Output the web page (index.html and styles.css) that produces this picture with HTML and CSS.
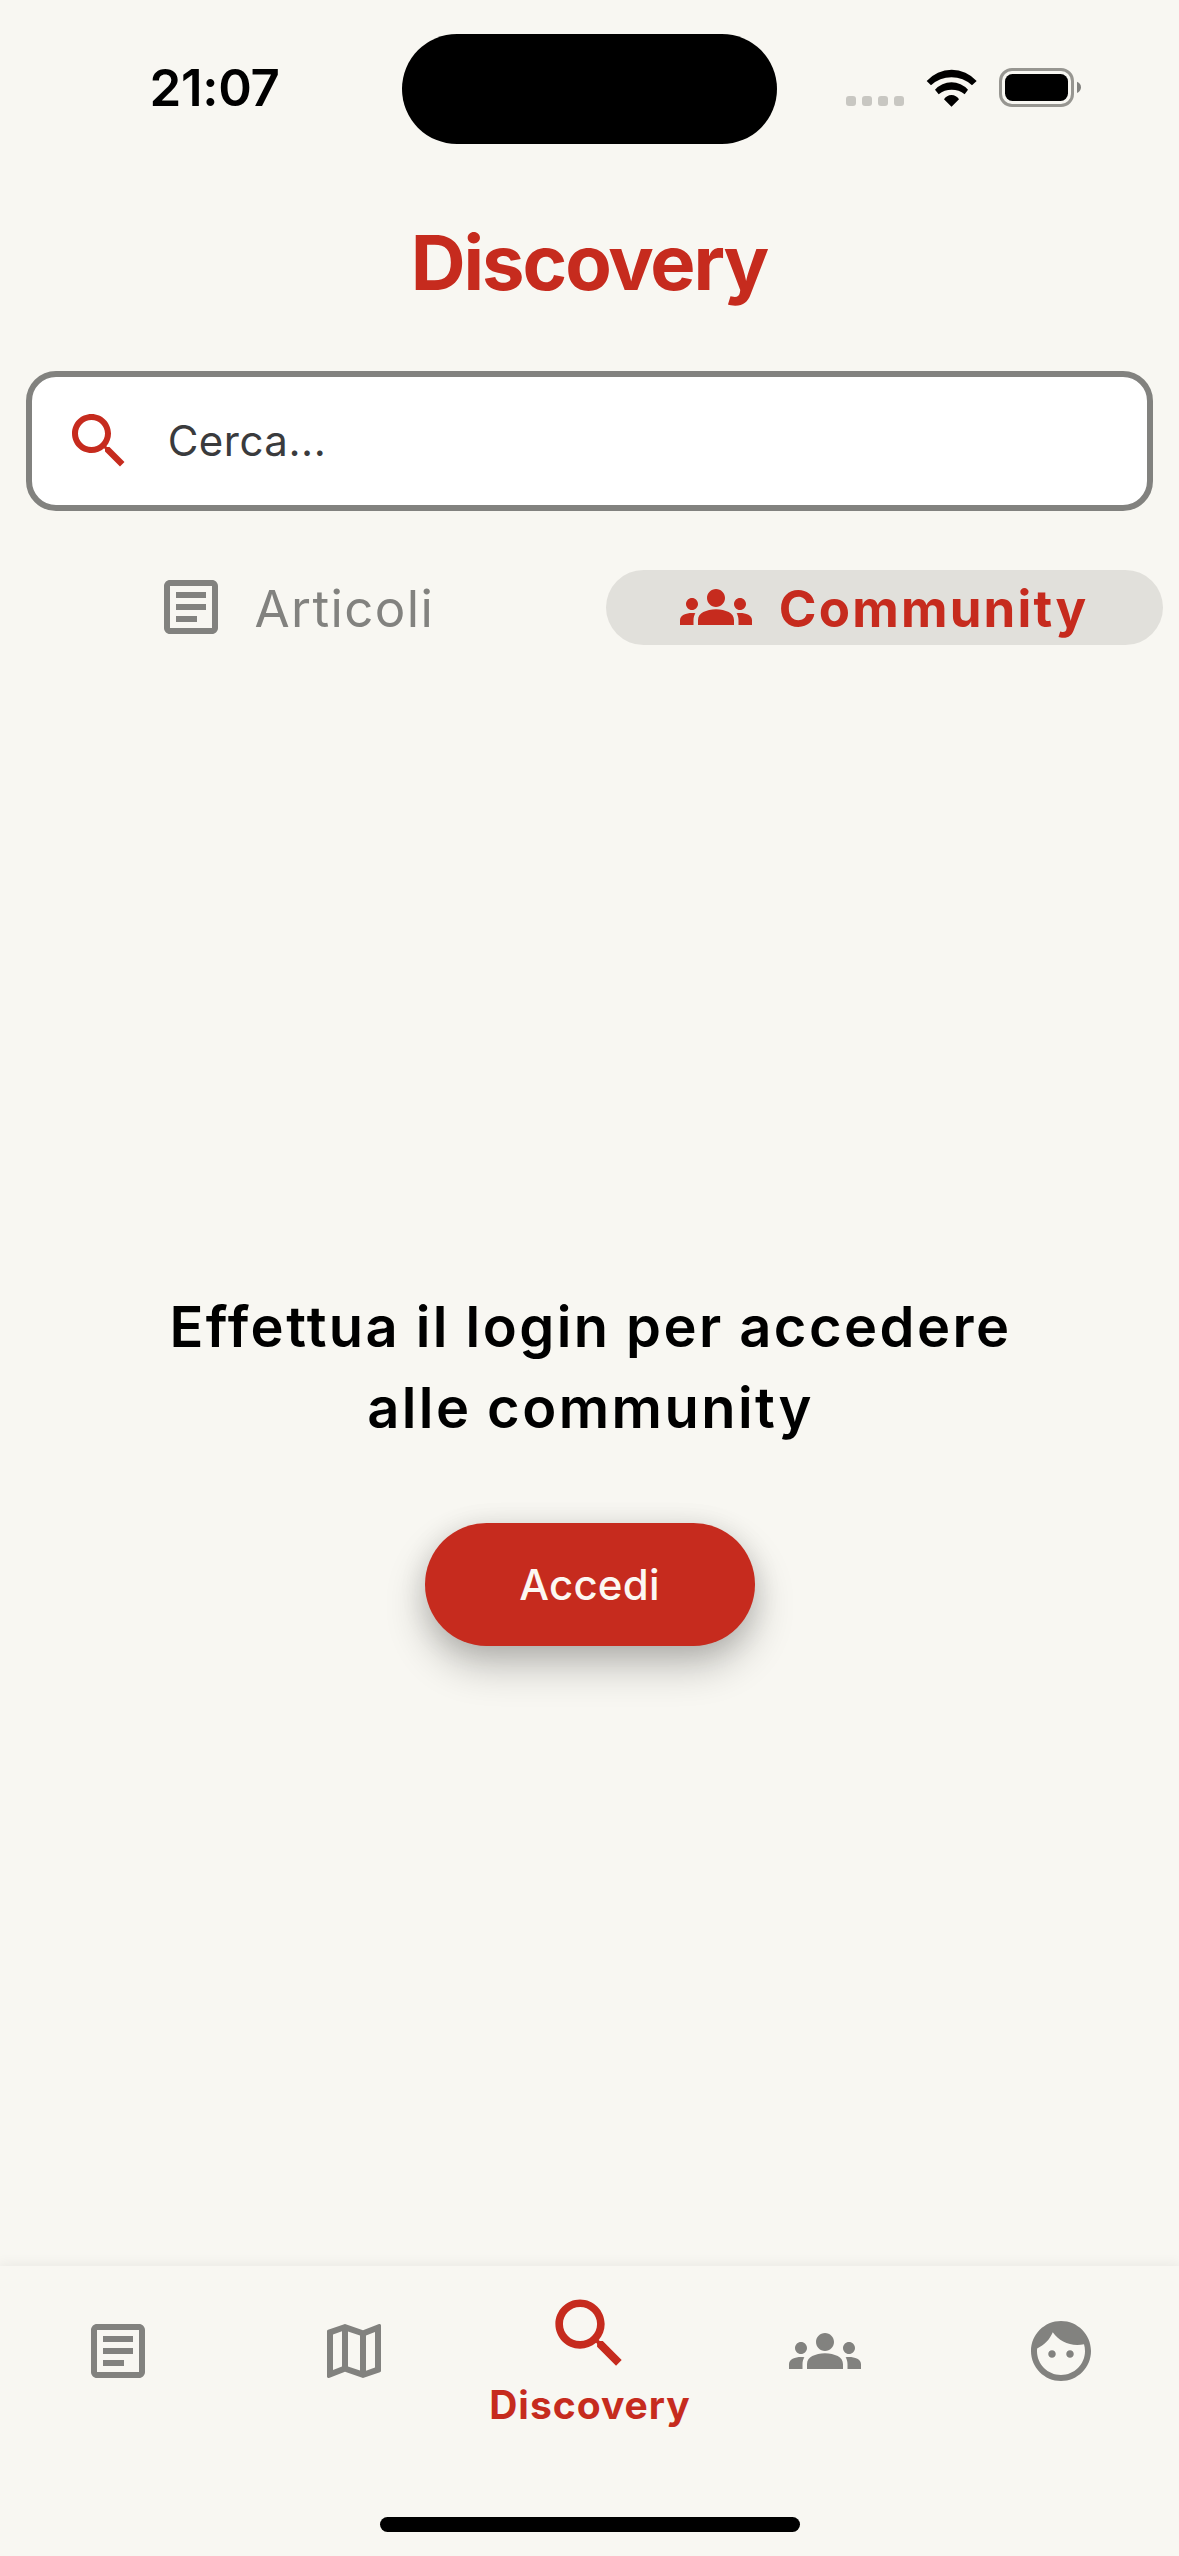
FILE: index.html
```html
<!DOCTYPE html>
<html lang="it">
<head>
<meta charset="utf-8">
<title>Discovery</title>
<link rel="stylesheet" href="styles.css">
</head>
<body>
<svg class="sprite" aria-hidden="true">
  <symbol id="search" viewBox="0 0 24 24"><path d="M15.5 14h-.79l-.28-.27C15.41 12.59 16 11.11 16 9.5 16 5.91 13.09 3 9.5 3S3 5.91 3 9.5 5.91 16 9.5 16c1.61 0 3.09-.59 4.23-1.57l.27.28v.79l5 4.99L20.49 19l-4.99-5zm-6 0C7.01 14 5 11.99 5 9.5S7.01 5 9.5 5 14 7.01 14 9.5 11.99 14 9.5 14z"/></symbol>
  <symbol id="article" viewBox="0 0 24 24"><path d="M19 5v14H5V5h14m0-2H5c-1.1 0-2 .9-2 2v14c0 1.1.9 2 2 2h14c1.1 0 2-.9 2-2V5c0-1.1-.9-2-2-2zM14 17H7v-2h7v2zm3-4H7v-2h10v2zm0-4H7V7h10v2z"/></symbol>
  <symbol id="groups" viewBox="0 0 24 24"><path d="M12 12.75c1.63 0 3.07.39 4.24.9 1.08.48 1.76 1.56 1.76 2.73V18H6v-1.61c0-1.18.68-2.26 1.76-2.73 1.17-.52 2.61-.91 4.24-.91zM4 13c1.1 0 2-.9 2-2s-.9-2-2-2-2 .9-2 2 .9 2 2 2zm1.13 1.1c-.37-.06-.74-.1-1.13-.1-.99 0-1.93.21-2.78.58C.48 14.9 0 15.62 0 16.43V18h4.5v-1.61c0-.83.23-1.61.63-2.29zM20 13c1.1 0 2-.9 2-2s-.9-2-2-2-2 .9-2 2 .9 2 2 2zm4 3.43c0-.81-.48-1.53-1.22-1.85-.85-.37-1.79-.58-2.78-.58-.39 0-.76.04-1.13.1.4.68.63 1.46.63 2.29V18H24v-1.57zM12 6c1.66 0 3 1.34 3 3s-1.34 3-3 3-3-1.34-3-3 1.34-3 3-3z"/></symbol>
  <symbol id="map" viewBox="0 0 24 24"><path d="M20.5 3l-.16.03L15 5.1 9 3 3.36 4.9c-.21.07-.36.25-.36.48V20.5c0 .28.22.5.5.5l.16-.03L9 18.9l6 2.1 5.64-1.9c.21-.07.36-.25.36-.48V3.5c0-.28-.22-.5-.5-.5zM10 5.47l4 1.4v11.66l-4-1.4V5.47zm-5 .99l3-1.01v11.7l-3 1.16V6.46zm14 11.08l-3 1.01V6.86l3-1.16v11.84z"/></symbol>
  <symbol id="face" viewBox="0 0 24 24"><path d="M9 11.75c-.69 0-1.25.56-1.25 1.25s.56 1.25 1.25 1.25 1.25-.56 1.25-1.25-.56-1.25-1.25-1.25zm6 0c-.69 0-1.25.56-1.25 1.25s.56 1.25 1.25 1.25 1.25-.56 1.25-1.25-.56-1.25-1.25-1.25zM12 2C6.48 2 2 6.48 2 12s4.48 10 10 10 10-4.48 10-10S17.52 2 12 2zm0 18c-4.41 0-8-3.59-8-8 0-.29.02-.58.05-.86 2.36-1.05 4.23-2.98 5.21-5.37C11.07 8.33 14.05 10 17.42 10c.78 0 1.53-.09 2.25-.26.21.71.33 1.47.33 2.26 0 4.41-3.59 8-8 8z"/></symbol>
</svg>
<div class="screen">
  <div class="status">
    <div class="time">21:07</div>
    <div class="island"></div>
    <div class="indicators">
      <div class="cellular"><i></i><i></i><i></i><i></i></div>
      <svg class="wifi" viewBox="438 145 153 114"><path d="M440 181A100 100 0 0 1 590 181L576 194A90 90 0 0 0 453 194ZM465 207A66 66 0 0 1 564 207L554 220.500A64 64 0 0 0 476 220.500ZM492 236A26 26 0 0 1 537 236L514.500 258Z"/></svg>
      <svg class="battery" viewBox="0 0 82 39"><rect class="battery-shell" x="1.500" y="1.500" width="72" height="36" rx="11.500"/><rect x="6" y="6" width="63" height="27" rx="7.500"/><path class="battery-tip" d="M78 13.700C80.700 14.800 82 16.900 82 19.300S80.700 23.900 78 25Z"/></svg>
    </div>
  </div>
  <h1 class="title">Discovery</h1>
  <div class="search-box">
    <svg class="icon red"><use href="#search"/></svg>
    <span class="placeholder">Cerca...</span>
  </div>
  <div class="tabs">
    <div class="tab"><svg class="icon"><use href="#article"/></svg><span>Articoli</span></div>
    <div class="tab tab-active"><svg class="icon"><use href="#groups"/></svg><span>Community</span></div>
  </div>
  <main class="content">
    <p class="message">Effettua il login per accedere<br>alle community</p>
    <button class="login">Accedi</button>
  </main>
  <nav class="nav">
    <div class="nav-items">
      <a class="nav-item"><svg class="icon"><use href="#article"/></svg></a>
      <a class="nav-item"><svg class="icon"><use href="#map"/></svg></a>
      <a class="nav-item nav-active"><svg class="icon"><use href="#search"/></svg><span class="nav-label">Discovery</span></a>
      <a class="nav-item"><svg class="icon"><use href="#groups"/></svg></a>
      <a class="nav-item"><svg class="icon"><use href="#face"/></svg></a>
    </div>
    <div class="home-indicator"></div>
  </nav>
</div>
</body>
</html>
```

FILE: styles.css
```css
:root {
  --bg: #f8f7f2;
  --red: #c62b1e;
  --grey: #82827f;
}

* { box-sizing: border-box; }

body {
  margin: 0;
  background: var(--bg);
  font-family: Inter, "Liberation Sans", sans-serif;
  color: #000;
}

.sprite { display: none; }

.screen {
  display: flex;
  flex-direction: column;
  width: 1179px;
  height: 2556px;
  overflow: hidden;
}

.icon {
  display: block;
  flex: none;
  width: 72px;
  height: 72px;
  fill: currentColor;
}

.red { color: var(--red); }

/* Status bar */
.status {
  display: grid;
  grid-template-columns: 402px 375px 402px;
  align-items: center;
  flex: none;
  height: 177px;
}

.time {
  padding: 0 0 1px 149.5px;
  font-size: 51px;
  font-weight: 600;
  line-height: 60px;
  letter-spacing: -0.3px;
}

.island {
  height: 110.5px;
  margin-top: 1px;
  border-radius: 56px;
  background: #000;
}

.indicators {
  display: flex;
  align-items: center;
  padding: 0 0 2px 69px;
}

.cellular {
  display: flex;
  gap: 6px;
  padding-top: 26px;
}

.cellular i {
  width: 10px;
  height: 10px;
  border-radius: 3px;
  background: #c8c7c2;
}

.wifi {
  width: 51px;
  height: 38px;
  margin-left: 22px;
}

.battery {
  width: 82px;
  height: 39px;
  margin-left: 22px;
}

.battery-shell {
  fill: none;
  stroke: #979691;
  stroke-width: 3;
}

.battery-tip { fill: #82827f; }

/* Header */
.title {
  flex: none;
  margin: 0;
  padding-right: 1px;
  height: 170px;
  font-size: 76px;
  font-weight: 700;
  line-height: 170px;
  letter-spacing: -2.1px;
  text-align: center;
  color: var(--red);
}

.search-box {
  display: flex;
  align-items: center;
  flex: none;
  gap: 33px;
  height: 140px;
  margin: 24px 26.4px 0;
  padding-left: 30.3px;
  border: 6px solid var(--grey);
  border-radius: 30px;
  background: #fff;
}

.placeholder {
  font-size: 42px;
  line-height: 60px;
  letter-spacing: 0.5px;
  color: #3a3b3d;
}

.tabs {
  display: grid;
  grid-template-columns: 1fr 1fr;
  flex: none;
  gap: 32.5px;
  margin: 59px 16.5px 0;
}

.tab {
  display: flex;
  align-items: center;
  justify-content: center;
  gap: 27px;
  height: 75px;
  border-radius: 38px;
  font-size: 51px;
  line-height: 75px;
  letter-spacing: 1.4px;
  color: var(--grey);
}

.tab .icon { margin-bottom: 1px; }

.tab span { padding-top: 1px; }

.tab-active {
  background: #e1e0db;
  color: var(--red);
  font-weight: 700;
  letter-spacing: 2.2px;
}

/* Login prompt */
.content {
  display: flex;
  flex-direction: column;
  align-items: center;
  flex: 1;
  padding-top: 642px;
}

.message {
  margin: 0;
  padding-left: 2px;
  font-size: 56px;
  font-weight: 600;
  line-height: 81px;
  letter-spacing: 2.45px;
  word-spacing: -1px;
  text-align: center;
}

.login {
  width: 330px;
  height: 123.5px;
  margin-top: 73.5px;
  padding: 0;
  border: 0;
  border-radius: 62px;
  background: var(--red);
  box-shadow: 0 20px 40px rgba(0, 0, 0, 0.24), 0 4px 28px rgba(0, 0, 0, 0.11);
  font: 500 42px/124px Inter, "Liberation Sans", sans-serif;
  letter-spacing: 0.2px;
  color: #fcf7f2;
}

/* Bottom navigation */
.nav {
  flex: none;
  height: 290px;
  background: var(--bg);
  box-shadow: 0 0 12px 2px rgba(0, 0, 0, 0.06);
}

.nav-items {
  display: grid;
  grid-template-columns: repeat(5, 1fr);
  height: 251px;
}

.nav-item {
  display: flex;
  flex-direction: column;
  align-items: center;
  padding-top: 49px;
  color: var(--grey);
}

.nav-active {
  padding-top: 21.5px;
  color: var(--red);
}

.nav-active .icon {
  width: 91px;
  height: 91px;
}

.nav-label {
  margin-top: 1.5px;
  padding-left: 1px;
  font-size: 39px;
  font-weight: 700;
  line-height: 50px;
  letter-spacing: 1px;
}

.home-indicator {
  width: 420px;
  height: 15px;
  margin: 0 auto;
  border-radius: 8px;
  background: #000;
}
```
